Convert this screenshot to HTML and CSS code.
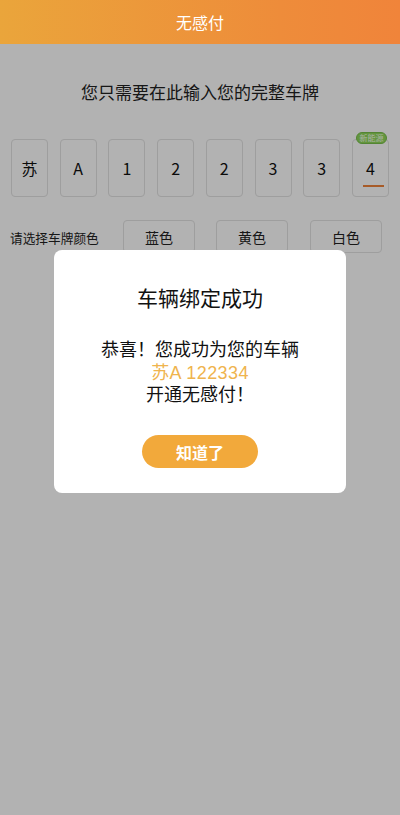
FILE: index.html
```html
<!DOCTYPE html>
<html lang="zh">
<head>
<meta charset="utf-8">
<link rel="stylesheet" href="styles.css">
</head>
<body>
<header class="topbar">无感付</header>
<main class="page">
  <p class="hint">您只需要在此输入您的完整车牌</p>
  <div class="plate">
    <div class="cell">苏</div>
    <div class="cell">A</div>
    <div class="cell">1</div>
    <div class="cell">2</div>
    <div class="cell">2</div>
    <div class="cell">3</div>
    <div class="cell">3</div>
    <div class="cell cell-new"><span class="badge">新能源</span>4<span class="caret"></span></div>
  </div>
  <div class="colors">
    <span class="colors-label">请选择车牌颜色</span>
    <div class="color-btns">
      <button class="cbtn">蓝色</button>
      <button class="cbtn">黄色</button>
      <button class="cbtn">白色</button>
    </div>
  </div>
</main>
<div class="mask">
  <div class="modal">
    <h2 class="modal-title">车辆绑定成功</h2>
    <div class="modal-text">
      <div class="line">恭喜！您成功为您的车辆</div>
      <div class="line plate-no">苏A 122334</div>
      <div class="line">开通无感付！</div>
    </div>
    <button class="ok">知道了</button>
  </div>
</div>
</body>
</html>
```

FILE: styles.css
```css
* { box-sizing: border-box; }
html, body { margin: 0; padding: 0; }
body {
  width: 400px;
  height: 815px;
  background: #ffffff;
  font-family: "Noto Sans CJK SC", "Noto Sans", sans-serif;
  color: #333;
  position: relative;
  overflow: hidden;
}
.topbar {
  height: 44px;
  background: linear-gradient(90deg, #eaa53b 0%, #ee8c3a 70%, #f0843a 100%);
  color: #fff;
  font-size: 16px;
  display: flex;
  align-items: center;
  justify-content: center;
  position: relative;
  z-index: 2;
}
.page { padding: 0 10px; }
.hint {
  margin: 36px 0 0;
  text-align: center;
  font-size: 17px;
  line-height: 24px;
  color: #222;
}
.plate {
  margin-top: 35px;
  display: flex;
  justify-content: space-between;
  padding: 0 1px;
}
.cell {
  width: 37px;
  height: 58px;
  border: 1px solid #e2e2e2;
  border-radius: 4px;
  display: flex;
  align-items: center;
  justify-content: center;
  font-size: 16px;
  color: #111;
  position: relative;
}
.badge {
  position: absolute;
  top: -8px;
  left: 3px;
  width: 31px;
  height: 12px;
  border-radius: 6px;
  background: #8fd65a;
  border: 1px solid #78bf4a;
  color: #f2ffe8;
  font-size: 8px;
  line-height: 10px;
  text-align: center;
}
.caret {
  position: absolute;
  left: 10px;
  bottom: 9px;
  width: 21px;
  height: 2px;
  background: #f0833a;
}
.colors {
  margin-top: 23px;
  display: flex;
  align-items: center;
}
.colors-label {
  font-size: 12.7px;
  color: #222;
  width: 113px;
  margin-top: 2px;
}
.color-btns {
  display: flex;
  gap: 21px;
}
.cbtn {
  width: 72px;
  height: 33px;
  border: 1px solid #e2e2e2;
  border-radius: 4px;
  background: transparent;
  font-family: inherit;
  font-size: 14px;
  color: #222;
  padding: 0;
}
.color-btns .cbtn:last-child { margin-left: 1px; }
.mask {
  position: absolute;
  top: 44px;
  left: 0;
  right: 0;
  bottom: 0;
  background: rgba(0, 0, 0, 0.3);
  z-index: 1;
  display: flex;
  justify-content: center;
  align-items: flex-start;
  padding-top: 206px;
}
.modal {
  width: 292px;
  height: 243px;
  background: #fff;
  border-radius: 8px;
  text-align: center;
  padding-top: 33px;
}
.modal-title {
  margin: 0;
  font-size: 21px;
  font-weight: normal;
  line-height: 28px;
  color: #111;
}
.modal-text {
  margin: 28px 0 0;
  font-family: "Liberation Sans", "Noto Sans CJK SC", sans-serif;
  font-size: 18px;
  color: #111;
  display: flex;
  flex-direction: column;
  align-items: center;
}
.line {
  height: 22.7px;
  line-height: 22.7px;
  white-space: nowrap;
}
.plate-no { color: #efb44e; letter-spacing: 0.4px; }
.ok {
  margin-top: 28px;
  width: 116px;
  height: 33px;
  border: none;
  border-radius: 17px;
  background: #f2a93b;
  color: #fff;
  font-family: inherit;
  font-size: 16px;
  font-weight: bold;
  padding: 0;
}
```
